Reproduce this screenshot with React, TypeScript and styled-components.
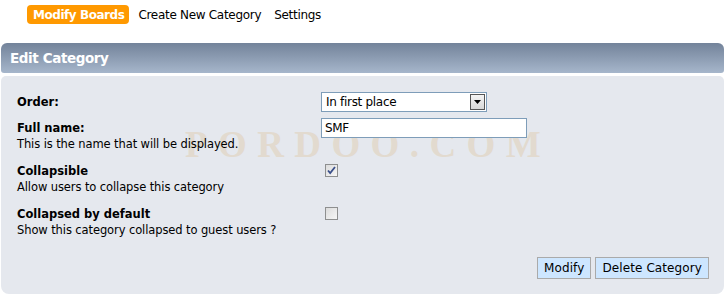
import React from "react";
import styled, { createGlobalStyle } from "styled-components";

const GlobalStyle = createGlobalStyle`
  html, body {
    margin: 0;
    padding: 0;
    background: #fff;
  }
  body {
    font-family: "DejaVu Sans", Verdana, sans-serif;
    color: #000;
  }
`;

function App() {
  return (
    <>
      <GlobalStyle />
      <Wrap>
        <Tabs>
          <Tab active>Modify Boards</Tab>
          <Tab>Create New Category</Tab>
          <Tab>Settings</Tab>
        </Tabs>
        <CatBar>Edit Category</CatBar>
        <Panel>
          <Watermark aria-hidden="true">PORDOO.COM</Watermark>
          <Form>
            <Term>
              <Label>Order:</Label>
            </Term>
            <Def>
              <SelectBox>
                <span>In first place</span>
                <Arrow>
                  <svg width="7" height="4" viewBox="0 0 7 4">
                    <path d="M0 0h7L3.5 4z" fill="#000" />
                  </svg>
                </Arrow>
              </SelectBox>
            </Def>

            <Term>
              <Label>Full name:</Label>
              <Desc>This is the name that will be displayed.</Desc>
            </Term>
            <Def>
              <TextInput defaultValue="SMF" />
            </Def>

            <Term>
              <Label>Collapsible</Label>
              <Desc>Allow users to collapse this category</Desc>
            </Term>
            <Def>
              <Check>
                <svg width="9" height="9" viewBox="0 0 9 9">
                  <path
                    d="M1 4.5l2.2 2.6L8 1"
                    stroke="#3a4f8a"
                    strokeWidth="1.8"
                    fill="none"
                  />
                </svg>
              </Check>
            </Def>

            <Term>
              <Label>Collapsed by default</Label>
              <Desc>Show this category collapsed to guest users ?</Desc>
            </Term>
            <Def>
              <Check />
            </Def>
          </Form>
          <Actions>
            <Button>Modify</Button>
            <Button>Delete Category</Button>
          </Actions>
        </Panel>
      </Wrap>
    </>
  );
}

const Wrap = styled.div`
  width: 725px;
  height: 295px;
  overflow: hidden;
`;

const Tabs = styled.div`
  display: flex;
  align-items: center;
  gap: 9px;
  padding: 5px 0 0 27px;
  height: 19px;
`;

const Tab = styled.a<{ active?: boolean }>`
  display: inline-flex;
  align-items: center;
  height: 19px;
  padding: ${(p) => (p.active ? "0 5px 0 6px" : "0")};
  margin-right: ${(p) => (p.active ? "0" : "4px")};
  border-radius: 4px;
  font-size: 12px;
  font-weight: ${(p) => (p.active ? "bold" : "normal")};
  letter-spacing: ${(p) => (p.active ? "-0.45px" : "-0.3px")};
  color: ${(p) => (p.active ? "#fff" : "#000")};
  background: ${(p) => (p.active ? "#ff9900" : "transparent")};
  cursor: pointer;
`;

const CatBar = styled.div`
  margin: 19px 1px 0 1px;
  height: 30px;
  display: flex;
  align-items: center;
  padding-left: 9px;
  border-radius: 6px 6px 3px 3px;
  background: linear-gradient(#73839a, #a6b6cb);
  color: #fff;
  font-weight: bold;
  font-size: 13.5px;
  letter-spacing: -0.4px;
`;

const Panel = styled.div`
  position: relative;
  margin: 3px 1px 0 1px;
  height: 218px;
  box-sizing: border-box;
  padding: 18px 15px 0 16px;
  background: #e5e8ee;
  border-radius: 5px 5px 8px 8px;
`;

const Watermark = styled.div`
  position: absolute;
  left: 184px;
  top: 50px;
  font-family: "Liberation Serif", "Times New Roman", serif;
  font-weight: bold;
  font-size: 37px;
  line-height: 37px;
  letter-spacing: 10.4px;
  color: #e2dacf;
  pointer-events: none;
  user-select: none;
`;

const Form = styled.dl`
  position: relative;
  margin: 0;
  display: grid;
  grid-template-columns: 304px 1fr;
  row-gap: 10px;
`;

const Term = styled.dt`
  margin: 0;
`;

const Def = styled.dd`
  margin: 0;
`;

const Label = styled.div`
  font-weight: bold;
  font-size: 11.5px;
  line-height: 16px;
  letter-spacing: 0;
`;

const Desc = styled.div`
  font-size: 11.5px;
  line-height: 17px;
  letter-spacing: -0.1px;
`;

const SelectBox = styled.div`
  width: 166px;
  height: 20px;
  margin: -2px 0 -2px 0;
  box-sizing: border-box;
  border: 1px solid #7e9db9;
  background: #fff;
  display: flex;
  align-items: center;
  justify-content: space-between;
  padding: 0 1px 0 4px;
  font-size: 12px;
  letter-spacing: -0.3px;
`;

const Arrow = styled.span`
  width: 15px;
  height: 16px;
  box-sizing: border-box;
  display: flex;
  align-items: center;
  justify-content: center;
  border: 1px solid #555;
  background: linear-gradient(#f4f4f4, #d8d8d8);
`;

const TextInput = styled.input`
  display: block;
  width: 206px;
  height: 20px;
  margin: -2px 0 0 0;
  box-sizing: border-box;
  border: 1px solid #7e9db9;
  padding: 0 3px;
  font-family: "DejaVu Sans", Verdana, sans-serif;
  font-size: 12px;
  letter-spacing: -0.3px;
  color: #000;
  outline: none;
`;

const Check = styled.span`
  display: flex;
  align-items: center;
  justify-content: center;
  margin: 1px 0 0 4px;
  width: 13px;
  height: 13px;
  box-sizing: border-box;
  border: 1px solid #8e8f8f;
  background: linear-gradient(135deg, #dcdcdc, #f6f6f6);
`;

const Actions = styled.div`
  position: relative;
  display: flex;
  justify-content: flex-end;
  gap: 4px;
  margin-top: 18px;
`;

const Button = styled.button`
  height: 22px;
  padding: 0 6px;
  border: 1px solid #aaa;
  background: #cde6ff;
  font-family: "DejaVu Sans", Verdana, sans-serif;
  font-size: 12px;
  letter-spacing: 0.1px;
  color: #000;
  cursor: pointer;
`;

export default App;
